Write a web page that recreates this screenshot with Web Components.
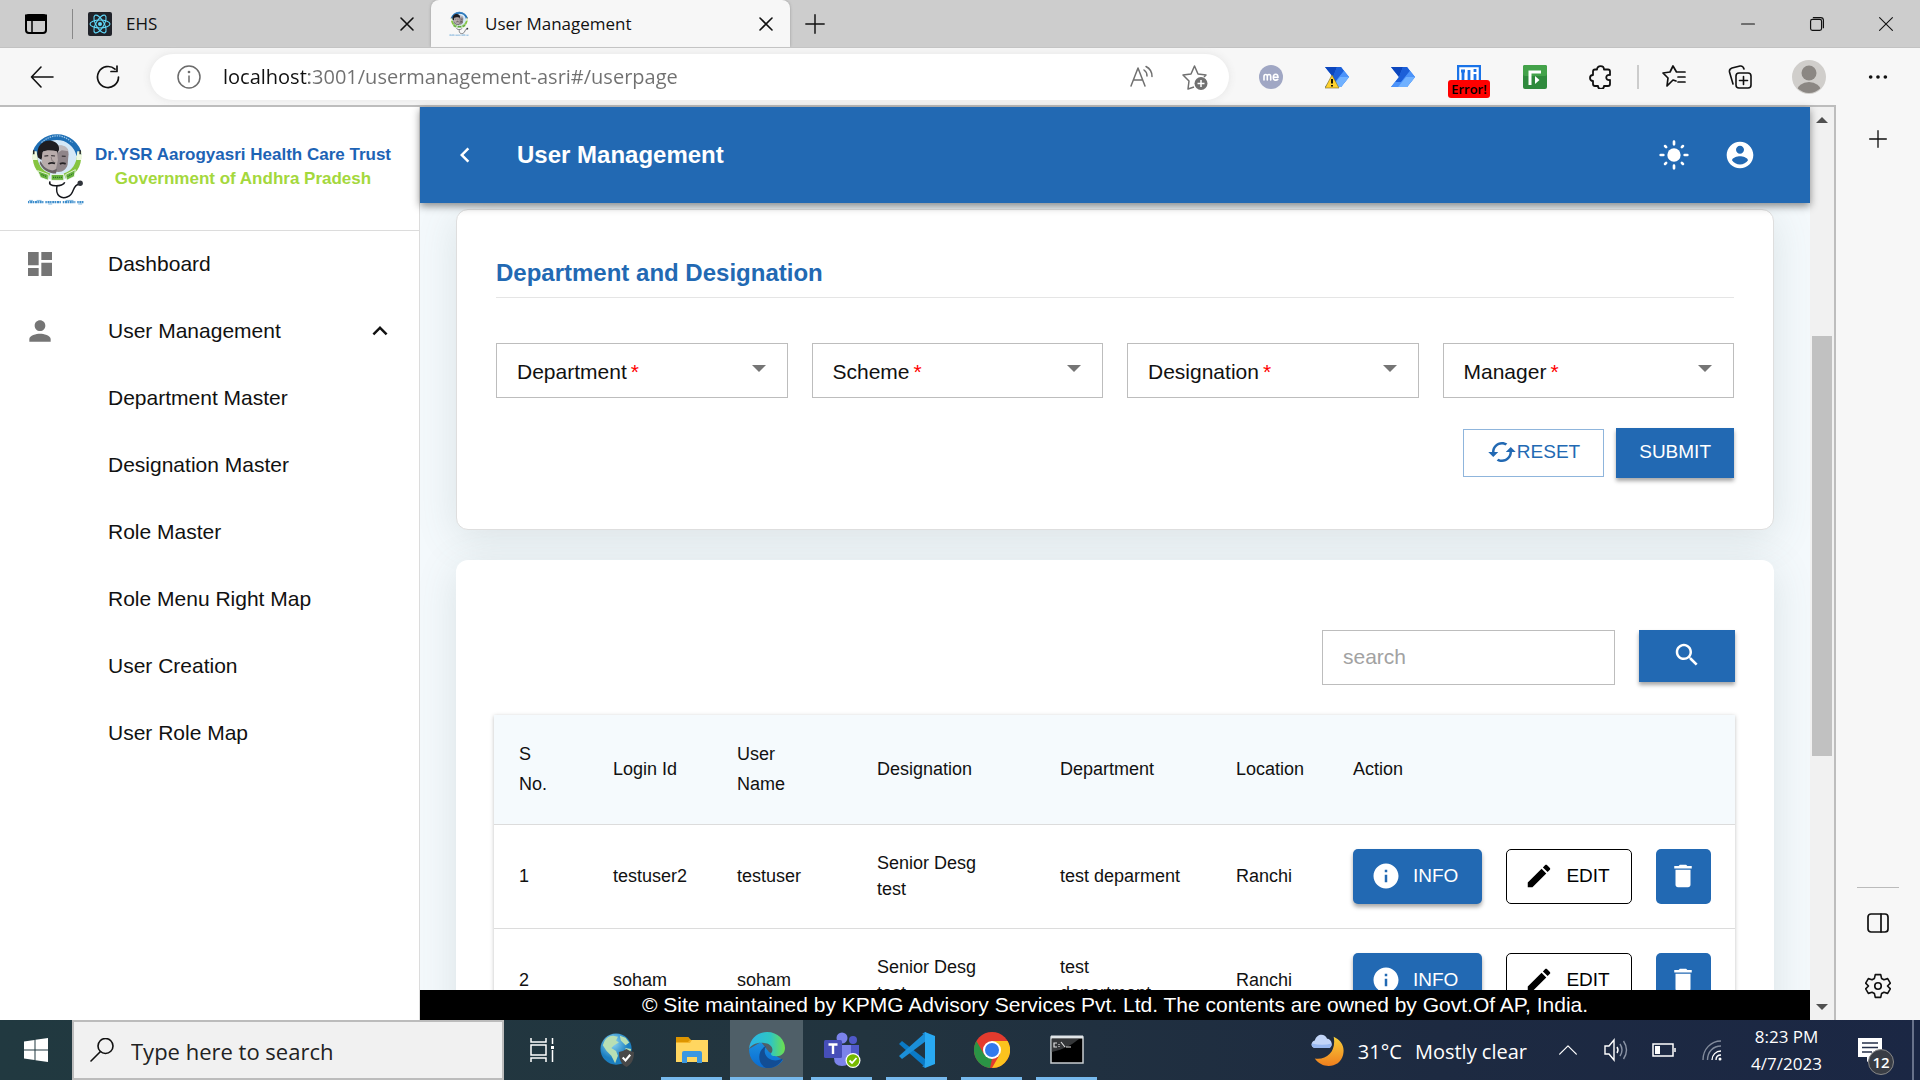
<!DOCTYPE html>
<html lang="en">
<head>
<meta charset="utf-8">
<title>User Management</title>
<style>
  html, body { height: 100%; }
  body {
    margin: 0;
    display: flex;
    flex-direction: column;
    overflow: hidden;
    font-family: "Liberation Sans", Arial, sans-serif;
    color: #111;
    --blue: #2269b3;
    --chrome: #f7f7f7;
    --ui-font: "Open Sans", "Segoe UI", sans-serif;
  }
  .workspace { flex: 1; display: flex; min-height: 0; }
  .page { flex: 1; display: flex; min-width: 0; border-top: 2px solid #bdbdbd; border-right: 2px solid #bdbdbd; }
  .main { flex: 1; min-width: 0; display: flex; flex-direction: column; background: #f4f9fc; }
  .content { flex: 1; min-height: 0; overflow: hidden; display: flex; flex-direction: column; gap: 30px; padding: 6px 36px 0; }
</style>
</head>
<body>
  <browser-tabs>
    <browser-tab icon="react">EHS</browser-tab>
    <browser-tab icon="trust" active>User Management</browser-tab>
  </browser-tabs>
  <browser-toolbar></browser-toolbar>
  <div class="workspace">
    <div class="page">
      <side-nav>
        <trust-brand slot="brand"></trust-brand>
        <nav-item icon="dashboard">Dashboard</nav-item>
        <nav-item icon="person" expanded>User Management</nav-item>
        <nav-item>Department Master</nav-item>
        <nav-item>Designation Master</nav-item>
        <nav-item>Role Master</nav-item>
        <nav-item>Role Menu Right Map</nav-item>
        <nav-item>User Creation</nav-item>
        <nav-item>User Role Map</nav-item>
      </side-nav>
      <div class="main">
        <app-header>User Management</app-header>
        <div class="content">
          <form-card heading="Department and Designation">
            <select-field label="Department"></select-field>
            <select-field label="Scheme"></select-field>
            <select-field label="Designation"></select-field>
            <select-field label="Manager"></select-field>
            <app-button slot="actions" variant="outline" icon="cached">RESET</app-button>
            <app-button slot="actions" variant="primary">SUBMIT</app-button>
          </form-card>
          <user-list></user-list>
        </div>
        <site-footer>© Site maintained by KPMG Advisory Services Pvt. Ltd. The contents are owned by Govt.Of AP, India.</site-footer>
      </div>
      <scroll-track></scroll-track>
    </div>
    <edge-rail></edge-rail>
  </div>
  <task-bar></task-bar>

<script>
const line = (body, w = 1.5, vb = 24) =>
  `<svg viewBox="0 0 ${vb} ${vb}" fill="none" stroke="currentColor" stroke-width="${w}" stroke-linecap="round" stroke-linejoin="round">${body}</svg>`;
const solid = (body) => `<svg viewBox="0 0 24 24" fill="currentColor">${body}</svg>`;

const TRUST = `<svg viewBox="0 0 60 76">
  <circle cx="31" cy="27" r="23" fill="#d5e8f7"/>
  <path d="M8 24A23.500 23.500 0 0 1 54 24" fill="none" stroke="#1f6fb5" stroke-width="6"/>
  <path d="M15 11Q31 -3 47 11" fill="none" stroke="#9cc6e6" stroke-width="1.300" stroke-dasharray="1.500 1"/>
  <path d="M6 23C5 36 12 45 22 48L24 43C15 40 11 33 10 23Z" fill="#86c440"/>
  <path d="M56 23C57 36 50 45 40 48L38 43C47 40 51 33 52 23Z" fill="#86c440"/>
  <path d="M5 20h5l1 9H6zM52 20h5l-1 9h-5z" fill="#eef8dd"/>
  <path d="M7 19v4M55 19v4" stroke="#222" stroke-width="1.500"/>
  <path d="M29 16C35 12 43 15 43 23L42 34C40 41 34 43 27 40Z" fill="#8f8589"/>
  <path d="M29 15C35 12 42 14 43 20L36 19L31 22Z" fill="#bdb8bb"/>
  <path d="M11 26C9 14 17 8 25 9C31 10 34 14 33 19L30 24L17 20L15 29Z" fill="#1f1d20"/>
  <path d="M16 21C20 18 26 19 31 20L32 29L30 38C25 42 18 38 15 31Z" fill="#b8acab"/>
  <path d="M14 30C18 38 25 42 31 38L30 43C22 43 15 38 13 32Z" fill="#6a6265"/>
  <path d="M18 25l4 -.5M25 24.500l4 .3M36 25l4 .3" stroke="#3a3538" stroke-width="1.200"/>
  <path d="M22 33q3 -2 7 -.5M34 33q3 -1.500 6 0" fill="none" stroke="#252225" stroke-width="1.800"/>
  <path d="M25 26l1 4 2 .5" fill="none" stroke="#877b7c" stroke-width="1"/>
  <path d="M11 40l11 4v6l-8 -3zM25 44h13v6H25zM40 44l10 -5 -1 7 -8 4z" fill="#68b33e" stroke="#fff" stroke-width=".8"/>
  <path d="M15 44l5 2M27 47h9M42 46l6 -3" stroke="#2d6b2c" stroke-width="1.300" stroke-dasharray="1 1"/>
  <path d="M24 51C20 57 38 57 39 52M31 56C29 66 36 70 42 67C50 64 46 55 54 54" fill="none" stroke="#15171c" stroke-width="1.500"/>
  <circle cx="55" cy="53" r="2.800" fill="#30343b"/>
  <path d="M1 72.500h16M19 72.500h16M37 72.500h13M52 72.500h7" fill="none" stroke="#3c8dcc" stroke-width="2.200" stroke-dasharray="1.500 .7 2.200 .5"/>
  <path d="M2 70.800h4M10 70.800h5M22 74.500h4M40 70.800h8M53 74.500h4" stroke="#7bb5e0" stroke-width="1"/>
</svg>`;

const FLOW = `<path d="M0 2h16l8 10-8 10H0l8-10Z" fill="#2f7bf0"/><path d="M0 2h12L8 12Z" fill="#0c46bd"/><path d="M12 2h4l3 4-9 11-6 .2L8 12Z" fill="#1c5fd8"/><path d="M19 5.700L24 12l-8 10H0l4-5h6Z" fill="#4b93fa"/><path d="M15 12h9l-8 10h-9Z" fill="#70b1ff"/>`;

const ICONS = {
  trust: TRUST,
  react: `<svg viewBox="0 0 24 24"><rect width="24" height="24" rx="2" fill="#20232a"/><g fill="none" stroke="#61dafb" stroke-width="1.100"><ellipse cx="12" cy="12" rx="10" ry="4"/><ellipse cx="12" cy="12" rx="10" ry="4" transform="rotate(60 12 12)"/><ellipse cx="12" cy="12" rx="10" ry="4" transform="rotate(120 12 12)"/></g><circle cx="12" cy="12" r="2" fill="#61dafb"/></svg>`,
  workspace: `<svg viewBox="0 0 24 24" fill="none" stroke="#000" stroke-width="2"><rect x="2" y="3" width="20" height="18" rx="3"/><path d="M2 3.500h20V8H2z" fill="#000"/><path d="M8 8v13" stroke-width="1.500"/></svg>`,
  close: line('<path d="M6 6l12 12M18 6L6 18"/>', 1.6),
  winclose: line('<path d="M5 5l14 14M19 5L5 19"/>', 1.2),
  minimize: line('<path d="M5 12h14"/>', 1.3),
  restore: line('<rect x="5" y="7" width="12" height="12" rx="2"/><path d="M8 5h8q3 0 3 3v8"/>', 1.3),
  plus: line('<path d="M12 2v20M2 12h20"/>', 1.6),
  back: line('<path d="M23 12H1.500M11 2L1.500 12L11 22"/>', 1.6),
  reload: line('<path d="M22.500 12a10.500 10.500 0 1 1-3.500-7.800M21 1v5.500h-6"/>', 1.7),
  infoline: `<svg viewBox="0 0 24 24" fill="none" stroke="#6b6b6b" stroke-width="1.500"><circle cx="12" cy="12" r="11"/><path d="M12 10.500v7" /><circle cx="12" cy="7" r=".6" fill="#6b6b6b"/></svg>`,
  readaloud: line('<path d="M1 21L8 3l7 18M3.500 15h9M14 5q3 2 3 6M16 1.500q6 3 6 10"/>', 1.5),
  staradd: `<svg viewBox="0 0 26 26" fill="none" stroke="#707070" stroke-width="1.500" stroke-linejoin="round"><path d="M12 23l-6 2 1-8-6-6 8-1L12.500 2l3.500 8 8 1-2 2"/><circle cx="19" cy="19.500" r="6.500" fill="#707070" stroke="none"/><path d="M19 16v7M15.500 19.500h7" stroke="#fff"/></svg>`,
  me: `<svg viewBox="0 0 24 24"><circle cx="12" cy="12" r="12" fill="#a0a7c4"/><g fill="none" stroke="#fff" stroke-width="1.600" stroke-linecap="round"><path d="M5 15v-3.500q0-2 1.700-2t1.600 2V15M8.300 11.500q0-2 1.700-2t1.700 2V15M14.500 12.300h4.500q0-3-2.300-3t-2.400 3 2.400 2.800q1.300 0 2-.7"/></g></svg>`,
  flow: `<svg viewBox="0 0 24 24">${FLOW}</svg>`,
  flowwarn: `<svg viewBox="0 0 24 24">${FLOW}<path d="M7 10L14 23H0Z" fill="#ffd22e" stroke="#7a6a20" stroke-width=".6"/><path d="M7 14v4.500M7 20v1.500" stroke="#000" stroke-width="1.800"/></svg>`,
  ti: `<svg viewBox="0 0 24 24"><path d="M1 24V1h22v23" fill="#fff" stroke="#1a73e8" stroke-width="2.500"/><path d="M4 6h4M6 6v18M12 5v19M18 9v15M18 4v3" stroke="#1a73e8" stroke-width="2.800"/></svg>`,
  green: `<svg viewBox="0 0 24 24"><rect width="24" height="24" rx="2" fill="#2f8a3d"/><rect width="24" height="11" rx="2" fill="#43a24a"/><path d="M7 20V7h11" fill="none" stroke="#fff" stroke-width="3"/><path d="M12 11l4.500 4-4.500 4z" fill="#fff"/></svg>`,
  puzzle: line('<path d="M8 4.500C8 0 15 0 15 4.500h4q2 0 2 2V10c-5-1-5 6 0 5v4q0 2-2 2h-4c0 4-6 4-6 0H6q-2 0-2-2v-3c-4 0-4-6 0-6V6.500q0-2 2-2Z"/>', 1.8),
  favorites: line('<path d="M14 16l-3-1-6 6 1-8-5-5 7-1L11 1l3.500 6H23M16 12h7M16 17h7"/>', 1.7),
  collections: line('<rect x="8" y="8" width="15" height="15" rx="3"/><path d="M15.500 11.500v8M11.500 15.500h8M5 19L1.500 7Q1 4 4 3l8-2q3-.500 4 3"/>', 1.6),
  avatar: `<svg viewBox="0 0 34 34"><defs><clipPath id="av"><circle cx="17" cy="17" r="16"/></clipPath></defs><circle cx="17" cy="17" r="17" fill="#d0cecb"/><g fill="#8b8783" clip-path="url(#av)"><circle cx="17" cy="13" r="7.500"/><ellipse cx="17" cy="31" rx="12" ry="9"/></g></svg>`,
  dots: solid('<circle cx="4" cy="12" r="2"/><circle cx="12" cy="12" r="2"/><circle cx="20" cy="12" r="2"/>'),
  dashboard: solid('<path d="M3 13h8V3H3v10zm0 8h8v-6H3v6zm10 0h8V11h-8v10zm0-18v6h8V3h-8z"/>'),
  person: solid('<path d="M12 12c2.210 0 4-1.790 4-4s-1.790-4-4-4-4 1.790-4 4 1.790 4 4 4zm0 2c-2.670 0-8 1.340-8 4v2h16v-2c0-2.660-5.330-4-8-4z"/>'),
  less: solid('<path d="M12 8l-6 6 1.410 1.410L12 10.830l4.590 4.580L18 14z"/>'),
  left: solid('<path d="M15.410 7.410L14 6l-6 6 6 6 1.410-1.410L10.830 12z"/>'),
  sun: `<svg viewBox="0 0 24 24" fill="currentColor" stroke="currentColor" stroke-width="2" stroke-linecap="round"><circle cx="12" cy="12" r="5" stroke="none"/><path d="M12 2v2M12 20v2M2 12h2M20 12h2M5.300 5.300l.8.8M17.900 17.900l.8.8M5.300 18.700l.8-.8M17.900 6.100l.8-.8"/></svg>`,
  account: solid('<path d="M12 2C6.480 2 2 6.480 2 12s4.480 10 10 10 10-4.480 10-10S17.520 2 12 2zm0 3c1.660 0 3 1.340 3 3s-1.340 3-3 3-3-1.340-3-3 1.340-3 3-3zm0 14.200c-2.500 0-4.710-1.280-6-3.220.030-1.990 4-3.080 6-3.080 1.990 0 5.970 1.090 6 3.080-1.290 1.940-3.500 3.220-6 3.220z"/>'),
  cached: solid('<path d="M19 8l-4 4h3c0 3.310-2.690 6-6 6-1.010 0-1.970-.250-2.800-.700l-1.460 1.460C8.970 19.540 10.430 20 12 20c4.420 0 8-3.580 8-8h3l-4-4zM6 12c0-3.310 2.690-6 6-6 1.010 0 1.970.250 2.800.700l1.460-1.460C15.030 4.460 13.570 4 12 4c-4.420 0-8 3.580-8 8H1l4 4 4-4H6z"/>'),
  info: solid('<path d="M12 2C6.480 2 2 6.480 2 12s4.480 10 10 10 10-4.480 10-10S17.520 2 12 2zm1 15h-2v-6h2v6zm0-8h-2V7h2v2z"/>'),
  edit: solid('<path d="M3 17.250V21h3.750L17.810 9.940l-3.750-3.750L3 17.250zM20.710 7.040c.390-.390.390-1.020 0-1.410l-2.340-2.340c-.390-.390-1.020-.390-1.410 0l-1.830 1.830 3.750 3.750 1.830-1.830z"/>'),
  delete: solid('<path d="M6 19c0 1.100.900 2 2 2h8c1.100 0 2-.900 2-2V7H6v12zM19 4h-3.500l-1-1h-5l-1 1H5v2h14V4z"/>'),
  search: solid('<path d="M15.500 14h-.790l-.280-.270C15.410 12.590 16 11.110 16 9.500 16 5.910 13.090 3 9.500 3S3 5.910 3 9.500 5.910 16 9.500 16c1.610 0 3.090-.590 4.230-1.570l.270.280v.790l5 4.990L20.490 19l-4.990-5zm-6 0C7.010 14 5 11.990 5 9.500S7.010 5 9.500 5 14 7.010 14 9.500 11.990 14 9.500 14z"/>'),
  panel: line('<rect x="2" y="3" width="20" height="18" rx="3"/><path d="M15 3v18"/>', 1.7),
  gear: line('<path d="M9.500 1.500h5l.8 3.500 2.200 1.200 3.400-1 2.500 4.200-2.600 2.600 2.600 2.600-2.500 4.200-3.400-1-2.200 1.200-.8 3.500h-5L8.700 19l-2.200-1.200-3.400 1L.6 14.600 3.200 12 .6 9.400l2.500-4.200 3.400 1L8.700 5z"/><circle cx="12" cy="12" r="3"/>', 1.5),
  windows: `<svg viewBox="0 0 24 24" fill="#fff"><path d="M0 3.500L10.500 2v9.500H0zM11.500 1.800L24 0v11.500H11.500zM0 12.500h10.500V22L0 20.500zM11.500 12.500H24V24l-12.500-1.800z"/></svg>`,
  find: line('<circle cx="15.500" cy="8" r="7.500"/><path d="M10.500 13.500L1 23"/>', 1.6),
  taskview: `<svg viewBox="0 0 24 24" fill="none" stroke="#fff" stroke-width="1.500"><path d="M1 0v4h15V0M1 24v-4h15v4M1 7h15v10H1zM22.500 0v6M22.500 12v12"/><path d="M21 8h3v3h-3z" fill="#fff" stroke="none"/></svg>`,
  globe: `<svg viewBox="0 0 36 36"><defs><radialGradient id="gl" cx=".4" cy=".3"><stop stop-color="#8fd8f5"/><stop offset="1" stop-color="#1c7fc0"/></radialGradient></defs><circle cx="17" cy="17" r="16.500" fill="url(#gl)"/><path d="M5 8Q8 3 14 3L19 4L17 8L20 10L15 13L12 16L17 19L19 24L16 32L12 24L7 19L3 13ZM21 3l6 2 4 5-4 3-5-5zM27 16l6 1-2 7-4-2z" fill="#b8dfb4"/><path d="M28 17q4 3 8 3c0 9-3 13-8 16-5-3-8-7-8-16q4 0 8-3z" fill="#484848"/><path d="M24 26l3 3 5-6" fill="none" stroke="#fff" stroke-width="2.200"/></svg>`,
  explorer: `<svg viewBox="0 0 36 36"><path d="M2 5h12l3 3h17v22H2z" fill="#f5b62a"/><path d="M2 5h12l2 3-2 2H2z" fill="#dd9500"/><path d="M2 11h14l2-3h16v22H2z" fill="#ffd660"/><path d="M8 31V21q0-2 2-2h16q2 0 2 2v10h-5v-6H13v6z" fill="#3b97e0"/></svg>`,
  edge: `<svg viewBox="0 0 36 36"><defs><linearGradient id="e1"><stop stop-color="#2ab4e8"/><stop offset=".6" stop-color="#2fc6c2"/><stop offset="1" stop-color="#6ee04c"/></linearGradient><linearGradient id="e2" x2="0" y2="1"><stop stop-color="#1b8fe0"/><stop offset="1" stop-color="#0a6bd0"/></linearGradient></defs><path d="M0 17C0 28 8 36 18 36C25 36 31 33 34 28L20 20L12 10Z" fill="url(#e2)"/><path d="M0 17C1 6 9 0 18 0C29 0 36 8 36 16C36 22 31 25 26 24C22 24 21 22 23 20C25 15 20 11 15 11C8 10 2 13 0 17Z" fill="url(#e1)"/><path d="M17 36C8 32 8 18 17 14C14 19 16 26 23 28C27 29 31 28 33.500 26.500C34 28 28 36 20 36Z" fill="#124d94"/></svg>`,
  teams: `<svg viewBox="0 0 38 36"><circle cx="19" cy="6" r="5.500" fill="#7b83eb"/><circle cx="30" cy="8" r="4" fill="#5059c9"/><path d="M25 13h11v11q-2 7-9 6z" fill="#5059c9"/><path d="M11 13h17v12q-1 9-9 9t-8-8z" fill="#7b83eb"/><rect x="1" y="8" width="18" height="18" rx="1.500" fill="#464eb8"/><path d="M5.500 12.500h9M10 12.500v9.500" stroke="#fff" stroke-width="2.400"/><circle cx="30" cy="28.500" r="7.500" fill="#fff"/><circle cx="30" cy="28.500" r="6.300" fill="#76b900"/><path d="M26.500 28.500l2.500 2.500 4.500-5" fill="none" stroke="#fff" stroke-width="1.800"/></svg>`,
  vscode: `<svg viewBox="0 0 36 36"><path d="M0 12l3-3 23 18v8z" fill="#0a7ac6"/><path d="M0 24l3 3L27 9V0z" fill="#1b8fd8"/><path d="M26 0l10 4v28l-10 4z" fill="#29a9f2"/><path d="M26 0v36l-3-2q3 0 3-5V7q0-5-3-5z" fill="#1c8cd8"/></svg>`,
  chrome: `<svg viewBox="0 0 36 36"><circle cx="18" cy="18" r="18" fill="#e33b2e"/><path d="M2.400 9L10.200 22.500L18 27L16 36A18 18 0 0 1 2.400 9Z" fill="#2a9445"/><path d="M33.600 9H18L25.800 22.500L18 36A18 18 0 0 0 33.600 9Z" fill="#fcc31e"/><circle cx="18" cy="18" r="9" fill="#fff"/><circle cx="18" cy="18" r="7" fill="#3279ed"/></svg>`,
  cmd: `<svg viewBox="0 0 36 36"><rect x="2" y="5" width="32" height="26" fill="#000" stroke="#c8cdd0" stroke-width="1.500"/><path d="M2 5h32" stroke="#e0e5e8" stroke-width="3"/><path d="M2.800 20Q18 17 30 7H2.800Z" fill="#343638"/><path d="M8 11H5v4h3M10 12v1M10 14v1M12 10l4 5M17 15h5" stroke="#ddd" stroke-width="1.200" fill="none"/></svg>`,
  moon: `<svg viewBox="0 0 36 36"><defs><linearGradient id="mn" x2="0" y2="1"><stop stop-color="#f7cf3a"/><stop offset="1" stop-color="#f07f1e"/></linearGradient></defs><path d="M24 4C32 8 36 14 34 23C31 37 12 39 4 27C17 29 27 19 24 4Z" fill="url(#mn)"/><path d="M4 16C-1 15 0 9 4 8C6 0 15 0 17 6C22 6 24 14 19 16Z" fill="#c2d5f8"/><path d="M4 16C1 15 0 12 1 11Q12 14 22 11Q22 15 19 16Z" fill="#98b8f0"/></svg>`,
  up: line('<path d="M2 17L12 7l10 10"/>', 1.5),
  speaker: `<svg viewBox="0 0 24 24" fill="none" stroke="#fff" stroke-width="1.400"><path d="M1 8h4l5-6v20l-5-6H1zM13 9q2 3 0 6"/><path d="M16 6q4 6 0 12M19.500 3q6 9 0 18" stroke="#8b94a5"/></svg>`,
  battery: `<svg viewBox="0 0 24 24" fill="none" stroke="#fff" stroke-width="1.500"><path d="M1 6h20v12H1z"/><path d="M23 10v4"/><path d="M3 8h5v8H3z" fill="#fff" stroke="none"/></svg>`,
  wifi: `<svg viewBox="0 0 24 24" fill="none" stroke="#838c9d" stroke-width="1.400"><path d="M3 22C3 11 11 3 21 3M7.500 22C7.500 14 13 8 21 8"/><path d="M12 22c0-5 4-9 9-9M16 22c0-3 2-5 5-5" stroke="#fff"/><circle cx="20" cy="21" r="1.500" fill="#fff" stroke="none"/></svg>`,
  note: `<svg viewBox="0 0 24 24"><path d="M0 0h24v19h-9l-6 5v-5H0z" fill="#fff"/><path d="M4 5h16M4 9.500h16M4 14h10" stroke="#26304a" stroke-width="1.500"/></svg>`
};

class Base extends HTMLElement {
  connectedCallback() {
    if (this.shadowRoot) return;
    const t = document.createElement('template');
    t.innerHTML = `<style>
      :host, *, *::before { box-sizing: border-box; }
      button { margin: 0; padding: 0; border: 0; background: none; color: inherit; font: inherit; display: flex; align-items: center; justify-content: center; }
      a { color: inherit; text-decoration: none; }
      input, select { font: inherit; margin: 0; border-radius: 0; outline: 0; min-width: 0; }
      ${this.css()}</style>${this.html()}`;
    this.attachShadow({ mode: 'open' }).append(t.content.cloneNode(true));
  }
  css() { return ''; }
  html() { return '<slot></slot>'; }
}
const icon = (name, size = 24) => `<ui-icon name="${name}" size="${size}"></ui-icon>`;
const iconButton = (name, label, size = 24, cls = '') => `<button class="${cls}" aria-label="${label}">${icon(name, size)}</button>`;

customElements.define('ui-icon', class extends Base {
  css() { return `:host { display: block; flex: none; width: ${this.getAttribute('size')}px; } svg { display: block; width: 100%; }`; }
  html() { return ICONS[this.getAttribute('name')]; }
});

customElements.define('browser-tab', class extends Base {
  css() { return `
    :host { display: flex; align-items: center; gap: 14px; flex: 0 0 359px; height: 100%; padding: 0 12px 0 16px; border-radius: 8px 8px 0 0; font: 17px/24px var(--ui-font); }
    :host([active]) { background: var(--chrome); box-shadow: 0 0 3px #999; }
    .fav { width: 24px; display: flex; justify-content: center; }
    .label { flex: 1; white-space: nowrap; }`; }
  html() { return `<span class="fav">${icon(this.getAttribute('icon'), this.getAttribute('icon') === 'trust' ? 20 : 24)}</span><span class="label"><slot></slot></span>${iconButton('close', 'Close tab', 24)}`; }
});

customElements.define('browser-tabs', class extends Base {
  css() { return `
    :host { display: flex; align-items: center; flex: none; height: 48px; background: #cdcdcd; overflow: hidden; border-bottom: 1px solid #c2c2c2; }
    .ws { width: 72px; }
    .tabs { display: flex; align-items: center; height: 100%; }
    .tabs::before { content: ""; width: 1px; height: 30px; background: #888; margin-right: -1px; }
    .new { width: 50px; }
    .win { display: flex; margin-left: auto; }
    .win button { width: 69px; height: 47px; }`; }
  html() { return `${iconButton('workspace', 'Tab actions', 24, 'ws')}<div class="tabs"><slot></slot></div>${iconButton('plus', 'New tab', 22, 'new')}
    <div class="win">${iconButton('minimize', 'Minimize', 22)}${iconButton('restore', 'Restore', 22)}${iconButton('winclose', 'Close', 22)}</div>`; }
});

customElements.define('browser-toolbar', class extends Base {
  css() { return `
    :host { display: flex; align-items: center; flex: none; height: 57px; padding: 0 9px; background: var(--chrome); }
    button { width: 66px; height: 46px; flex: none; }
    .address { flex: 1; display: flex; align-items: center; height: 46px; margin: 0 9px; padding: 0 8px 0 27px; border-radius: 23px; background: #fff; box-shadow: 0 0 8px #e4e4e4; color: #707070; }
    .address button { width: 53px; }
    .address input { flex: 1; margin-left: 22px; padding: 0; border: 0; font: 20px/28px var(--ui-font); color: #707070; -webkit-text-fill-color: transparent; background: linear-gradient(90deg, #111 86px, #707070 86px); -webkit-background-clip: text; background-clip: text; }
    .sep { width: 7px; display: flex; justify-content: center; }
    .sep::before { content: ""; width: 2px; height: 24px; background: #ccc; }
    .ti { position: relative; }
    .badge { position: absolute; top: 26px; left: 12px; width: 42px; height: 18px; border-radius: 3px; background: #f00; color: #000; font: 600 13px/18px var(--ui-font); text-align: center; }
    .profile { width: 72px; }`; }
  html() { return `${iconButton('back', 'Back')}${iconButton('reload', 'Refresh')}
    <div class="address">${icon('infoline')}<input aria-label="Address" value="localhost:3001/usermanagement-asri#/userpage">${iconButton('readaloud', 'Read aloud')}${iconButton('staradd', 'Add to favorites', 26)}</div>
    ${iconButton('me', 'Extension')}${iconButton('flowwarn', 'Flow extension')}${iconButton('flow', 'Flow extension')}
    <button class="ti" aria-label="Extension error">${icon('ti')}<span class="badge">Error!</span></button>
    ${iconButton('green', 'Extension')}${iconButton('puzzle', 'Extensions')}<span class="sep"></span>
    ${iconButton('favorites', 'Favorites')}${iconButton('collections', 'Collections')}${iconButton('avatar', 'Profile', 34, 'profile')}${iconButton('dots', 'Settings', 22)}`; }
});

customElements.define('trust-brand', class extends Base {
  css() { return `
    :host { display: flex; gap: 8px; height: 124px; padding: 25px 26px 0 27px; border-bottom: 1px solid #dcdcdc; font-weight: 700; font-size: 17px; line-height: 24px; text-align: center; white-space: nowrap; }
    .name { padding-top: 11px; flex: 1; }
    .name div { color: #1d63b5; }
    .name div + div { color: #a4d83c; }`; }
  html() { return `${icon('trust', 58)}<div class="name"><div>Dr.YSR Aarogyasri Health Care Trust</div><div>Government of Andhra Pradesh</div></div>`; }
});

customElements.define('side-nav', class extends Base {
  css() { return `:host { display: block; flex: 0 0 420px; background: #fff; border-right: 1px solid #dcdcdc; }`; }
  html() { return `<slot name="brand"></slot><nav aria-label="Main"><slot></slot></nav>`; }
});

customElements.define('nav-item', class extends Base {
  css() { return `
    :host { display: block; }
    a { display: flex; align-items: center; height: 67px; padding: 0 24px 2px; font-size: 21px; }
    .lead { width: 84px; color: #757575; }
    .label { flex: 1; }`; }
  html() { const i = this.getAttribute('icon'); return `<a href="#"><span class="lead">${i ? icon(i, 32) : ''}</span><span class="label"><slot></slot></span>${this.hasAttribute('expanded') ? icon('less', 30) : ''}</a>`; }
});

customElements.define('app-header', class extends Base {
  css() { return `
    :host { display: flex; align-items: center; flex: none; height: 96px; padding: 0 37px 0 30px; background: var(--blue); color: #fff; box-shadow: 0 3px 8px rgba(0,0,0,.45); position: relative; z-index: 1; }
    h1 { flex: 1; margin: 0 0 0 37px; font-size: 24px; line-height: 32px; }
    .act { width: 66px; }`; }
  html() { return `${iconButton('left', 'Back', 30)}<h1><slot></slot></h1>${iconButton('sun', 'Theme', 32, 'act')}${iconButton('account', 'Account', 32, 'act')}`; }
});

customElements.define('app-button', class extends Base {
  css() { return `
    :host { display: block; }
    button { height: 50px; padding: 0 23px 2px; font-size: 19px; }
    button.outline { height: 48px; border: 1px solid #8fb5dc; color: var(--blue); background: #fff; }
    button.primary, button.info, button.delete, button.search { color: #fff; background: var(--blue); }
    button.primary, button.info, button.search { box-shadow: 0 3px 4px rgba(0,0,0,.35); }
    button.search { width: 96px; height: 52px; }
    button.info, button.edit { gap: 12px; height: 55px; padding: 0 24px 0 18px; border-radius: 5px; }
    button.edit { padding: 0 21px 0 17px; border: 1px solid #000; color: #000; background: #fff; }
    button.delete { width: 55px; height: 55px; padding: 0; border-radius: 5px; }`; }
  html() { const i = this.getAttribute('icon'), l = this.getAttribute('label'); return `<button class="${this.getAttribute('variant')}" ${l ? `aria-label="${l}"` : ''}>${i ? icon(i, 30) : ''}<slot></slot></button>`; }
});

customElements.define('select-field', class extends Base {
  css() { return `
    :host { display: grid; height: 55px; font-size: 21px; }
    select, label, .arrow { grid-area: 1 / 1; }
    select { appearance: none; width: 100%; border: 1px solid #bdbdbd; background: #fff; }
    label { display: flex; gap: 4px; align-self: center; padding: 2px 21px 0; pointer-events: none; }
    em { color: #f00; font-style: normal; }
    .arrow { align-self: center; justify-self: end; margin: 0 22px 4px 0; border: 7px solid transparent; border-top-color: #757575; border-bottom: 0; pointer-events: none; }`; }
  html() { return `<select id="f"><option></option></select><label for="f"><span>${this.getAttribute('label')}</span><em>*</em></label><span class="arrow"></span>`; }
});

customElements.define('form-card', class extends Base {
  css() { return `
    :host { display: block; flex: none; padding: 48px 39px 51px; border: 1px solid #dedede; border-radius: 12px; background: #fff; box-shadow: 0 8px 40px rgba(90,115,110,.16); }
    h2 { margin: 0 0 45px; padding-bottom: 9px; border-bottom: 1px solid #e5e5e5; color: var(--blue); font-size: 24px; line-height: 30px; }
    .fields { display: grid; grid-template-columns: repeat(4, 1fr); gap: 24px; }
    .actions { display: flex; align-items: center; justify-content: flex-end; gap: 12px; margin-top: 30px; }`; }
  html() { return `<h2>${this.getAttribute('heading')}</h2><div class="fields"><slot></slot></div><div class="actions"><slot name="actions"></slot></div>`; }
});

const USERS = [
  ['1', 'testuser2', 'testuser', 'Senior Desg test', 'test deparment', 'Ranchi'],
  ['2', 'soham', 'soham', 'Senior Desg test', 'test department', 'Ranchi']
];
customElements.define('user-list', class extends Base {
  css() { return `
    :host { display: block; flex: none; padding: 70px 39px 40px 38px; border-radius: 12px; background: #fff; box-shadow: 0 8px 40px rgba(90,115,110,.16); }
    .find { display: flex; justify-content: flex-end; align-items: flex-start; gap: 24px; margin-bottom: 30px; }
    .find input { width: 293px; height: 55px; padding: 0 20px 2px; border: 1px solid #bdbdbd; font-size: 21px; }
    .find input::placeholder { color: #a2a2a2; }
    table { width: 100%; table-layout: fixed; border-collapse: collapse; font-size: 18px; box-shadow: 0 1px 4px rgba(0,0,0,.25); }
    th, td { padding: 0 28px 0 25px; text-align: left; border-bottom: 1px solid #dcdcdc; font-weight: 400; }
    thead { background: #f5fafd; }
    th { height: 109px; line-height: 30px; }
    td { height: 104px; line-height: 26px; }
    td:last-child { padding-right: 0; }
    .row { display: flex; gap: 24px; }`; }
  html() {
    const widths = [94, 124, 140, 183, 176, 117];
    return `<div class="find"><input type="search" aria-label="search" placeholder="search"><app-button variant="search" icon="search" label="Search"></app-button></div>
    <table><colgroup>${widths.map(w => `<col style="width:${w}px">`).join('')}<col></colgroup>
    <thead><tr>${['S No.', 'Login Id', 'User Name', 'Designation', 'Department', 'Location', 'Action'].map(h => `<th scope="col">${h}</th>`).join('')}</tr></thead>
    <tbody>${USERS.map(u => `<tr>${u.map(c => `<td>${c}</td>`).join('')}<td><div class="row"><app-button variant="info" icon="info">INFO</app-button><app-button variant="edit" icon="edit">EDIT</app-button><app-button variant="delete" icon="delete" label="Delete"></app-button></div></td></tr>`).join('')}</tbody></table>`;
  }
});

customElements.define('site-footer', class extends Base {
  css() { return `:host { display: block; flex: none; background: #000; color: #fff; font-size: 21px; line-height: 30px; text-align: center; position: relative; }`; }
});

customElements.define('scroll-track', class extends Base {
  css() { return `
    :host { display: flex; flex-direction: column; align-items: center; flex: 0 0 24px; padding: 10px 0; background: #f1f1f1; }
    i { border: 6px solid transparent; }
    .u { border-bottom-color: #505050; border-top: 0; }
    .d { border-top-color: #505050; border-bottom: 0; }
    .a { flex: 213; } .t { flex: 420; width: 20px; background: #c1c1c1; } .b { flex: 248; }`; }
  html() { return `<i class="u"></i><div class="a"></div><div class="t"></div><div class="b"></div><i class="d"></i>`; }
});

customElements.define('edge-rail', class extends Base {
  css() { return `
    :host { display: flex; flex-direction: column; align-items: center; flex: 0 0 84px; padding: 22px 0; background: var(--chrome); }
    .top { margin-bottom: auto; }
    button { height: 24px; }
    hr { width: 42px; margin: 0 0 23px; border: 0; border-top: 1px solid #bbb; }
    .panel { margin-bottom: 39px; }`; }
  html() { return `${iconButton('plus', 'Add site', 20, 'top')}<hr>${iconButton('panel', 'Hide sidebar', 24, 'panel')}${iconButton('gear', 'Settings', 26)}`; }
});

customElements.define('task-bar', class extends Base {
  css() { return `
    :host { display: flex; flex: none; height: 60px; background: linear-gradient(90deg, #213940 0%, #22343f 45%, #1d2a41 75%, #1b2744 100%); color: #fff; font-family: var(--ui-font); }
    .start { width: 72px; }
    .search { display: flex; align-items: center; gap: 17px; width: 432px; padding: 0 16px; border: 2px solid #bcbcbc; background: #f1f1f1; color: #111; }
    .search input { flex: 1; padding: 2px 0 0; border: 0; background: none; font-size: 22px; }
    .search input::placeholder { color: #222; }
    .app { width: 73px; margin: 0 1px; }
    .run { background: linear-gradient(#76b9ed, #76b9ed) center bottom / 61px 3px no-repeat; }
    .active { background: linear-gradient(#76b9ed, #76b9ed) center bottom / 73px 3px no-repeat, #4f5f68; }
    .tray { display: flex; align-items: center; margin-left: auto; }
    .tray button { height: 60px; }
    .weather { gap: 13px; font-size: 20px; margin-right: 17px; }
    .weather span { padding-top: 2px; }
    .small { width: 48px; }
    .clock { width: 101px; font-size: 17px; line-height: 27px; text-align: center; margin-right: 7px; }
    .notes { position: relative; width: 70px; border-right: 2px solid #68728a; margin-right: 6px; }
    .notes ui-icon { margin-right: 16px; }
    .count { position: absolute; left: 24px; top: 29px; width: 26px; height: 26px; border: 1px solid #888; border-radius: 50%; background: #393d45; font-size: 15px; font-weight: 600; line-height: 24px; text-align: center; }`; }
  html() { return `${iconButton('windows', 'Start', 24, 'start')}
    <label class="search">${icon('find')}<input aria-label="Search" placeholder="Type here to search"></label>
    ${iconButton('taskview', 'Task view', 24, 'app')}${iconButton('globe', 'Browser', 34, 'app')}
    ${iconButton('explorer', 'File Explorer', 36, 'app run')}${iconButton('edge', 'Edge', 36, 'app active')}${iconButton('teams', 'Teams', 38, 'app run')}${iconButton('vscode', 'VS Code', 36, 'app run')}${iconButton('chrome', 'Chrome', 36, 'app run')}${iconButton('cmd', 'Command Prompt', 36, 'app run')}
    <div class="tray"><button class="weather">${icon('moon', 34)}<span>31°C</span><span>Mostly clear</span></button>
    ${iconButton('up', 'Hidden icons', 20, 'small')}${iconButton('speaker', 'Volume', 24, 'small')}${iconButton('battery', 'Battery', 24, 'small')}${iconButton('wifi', 'Network', 24, 'small')}
    <div class="clock"><div>8:23 PM</div><div>4/7/2023</div></div>
    <button class="notes" aria-label="Notifications">${icon('note', 24)}<span class="count">12</span></button></div>`; }
});
</script>
</body>
</html>
